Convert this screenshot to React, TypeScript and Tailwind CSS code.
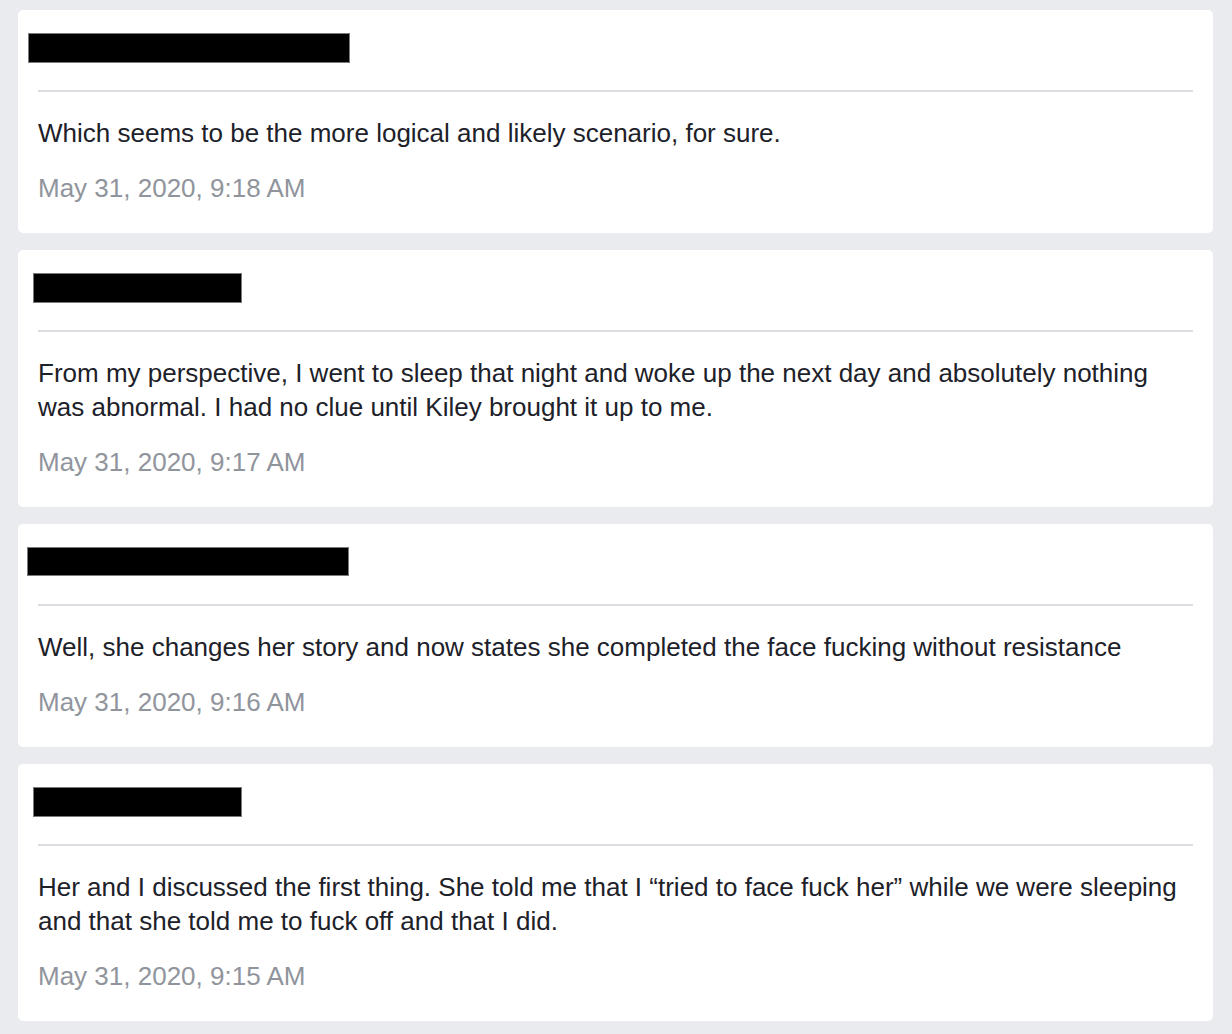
const messages = [
  {
    box: 'ml-[10px] w-[322px] h-[30px]',
    text: 'Which seems to be the more logical and likely scenario, for sure.',
    date: 'May 31, 2020, 9:18 AM',
  },
  {
    box: 'ml-[15px] w-[209px] h-[30px]',
    text: 'From my perspective, I went to sleep that night and woke up the next day and absolutely nothing was abnormal. I had no clue until Kiley brought it up to me.',
    date: 'May 31, 2020, 9:17 AM',
  },
  {
    box: 'ml-[9px] w-[322px] h-[29px]',
    text: 'Well, she changes her story and now states she completed the face fucking without resistance',
    date: 'May 31, 2020, 9:16 AM',
  },
  {
    box: 'ml-[15px] w-[209px] h-[30px]',
    text: 'Her and I discussed the first thing. She told me that I \u201ctried to face fuck her\u201d while we were sleeping and that she told me to fuck off and that I did.',
    date: 'May 31, 2020, 9:15 AM',
  },
];

function MessageCard({ box, text, date }: { box: string; text: string; date: string }) {
  return (
    <div className="rounded-[5px] bg-white">
      <div className="h-[80px] pt-[23px]">
        <div className={`${box} border border-[#7a7a7a] bg-black`} />
      </div>
      <div className="px-5 pb-[28px]">
        <div className="h-[2px] bg-[#dadde1]" />
        <p className="mt-6 text-[26px] leading-[34px] text-[#1d2129]">{text}</p>
        <p className="mt-[21px] text-[26px] leading-[34px] text-[#90949c]">{date}</p>
      </div>
    </div>
  );
}

export default function App() {
  return (
    <div className="min-h-screen bg-[#e9ebee] pl-[18px] pr-[19px] pt-[10px] pb-[13px] font-['Liberation_Sans',Arial,sans-serif]">
      <div className="flex flex-col gap-[17px]">
        {messages.map((m) => (
          <MessageCard key={m.date} {...m} />
        ))}
      </div>
    </div>
  );
}
